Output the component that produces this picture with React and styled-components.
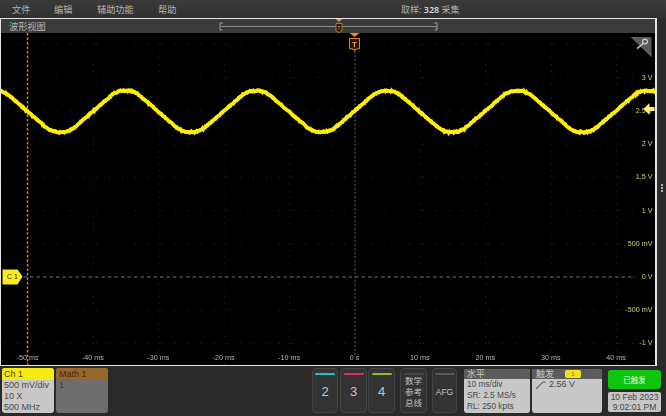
import React from 'react'
import styled, { createGlobalStyle } from 'styled-components'

const FONT = `"Noto Sans", "Noto Sans CJK SC", sans-serif`
const CARD_FONT = `"Liberation Sans", "Noto Sans CJK SC", sans-serif`

const GlobalStyle = createGlobalStyle`
  html, body { margin: 0; padding: 0; background: #2a2a2a; }
  body { font-family: ${FONT}; }
`

const Screen = styled.div`
  width: 666px;
  height: 416px;
  display: flex;
  flex-direction: column;
  overflow: hidden;
  background: #2a2a2a;
`

const MenuBar = styled.div`
  height: 18px;
  flex: none;
  display: flex;
  align-items: center;
  padding-left: 12px;
  background: linear-gradient(#3a3a3a, #303030);
  color: #b4b4b4;
  font-size: 9.2px;
`

const MenuItem = styled.span`
  width: ${p => p.$w}px;
  flex: none;
`

const AcqStatus = styled.span`
  margin-left: 215px;
  color: #b0b0b0;
  font-size: 9px;
  b { color: #d8d8d8; font-weight: 600; }
`

const Main = styled.div`
  height: 348px;
  flex: none;
  display: flex;
`

const ScopeFrame = styled.div`
  width: 657px;
  flex: none;
  box-sizing: border-box;
  display: flex;
  flex-direction: column;
  border: 1.5px solid #e4e4e4;
  border-right-width: 2px;
  background: #000;
`

const TitleBar = styled.div`
  height: 14px;
  flex: none;
  display: flex;
  align-items: center;
  padding-left: 8px;
  background: #3b3b3b;
  color: #b8b8b8;
  font-size: 9.2px;
`

const TitleText = styled.span`
  width: 209px;
  flex: none;
`

const Plot = styled.svg`
  display: block;
  flex: 1;
  min-height: 0;
  width: 100%;
  filter: blur(0.3px);
  font-family: ${CARD_FONT};
`

const SidePanel = styled.div`
  flex: 1;
  display: flex;
  flex-direction: column;
  align-items: center;
  justify-content: center;
  gap: 1px;
  padding-bottom: 8px;
  background: #2c2c2c;
`

const Dot = styled.span`
  width: 2px;
  height: 2px;
  background: #b0b0b0;
`

const BottomBar = styled.div`
  flex: 1;
  display: flex;
  align-items: flex-start;
  padding: 2px 4px 0 2px;
  background: #2a2a2a;
  font-family: ${CARD_FONT};
`

const Badge = styled.div`
  width: ${p => p.$w}px;
  height: ${p => p.$h || 45}px;
  flex: none;
  margin-top: ${p => p.$mt || 0}px;
  margin-right: ${p => p.$mr || 0}px;
  box-sizing: border-box;
  border-radius: 3px;
  overflow: hidden;
  display: flex;
  flex-direction: column;
  background: ${p => p.$bg};
  color: ${p => p.$fg};
  font-size: ${p => p.$size || 9}px;
  line-height: 11px;
`

const BadgeHead = styled.div`
  height: ${p => p.$h}px;
  flex: none;
  display: flex;
  align-items: center;
  padding-left: ${p => p.$pad}px;
  background: ${p => p.$bg};
  color: ${p => p.$fg};
  font-size: 9px;
`

const BadgeBody = styled.div`
  padding-left: ${p => p.$pad}px;
  white-space: nowrap;
`

const SoftKey = styled.div`
  width: ${p => p.$w}px;
  height: 45px;
  flex: none;
  margin-right: ${p => p.$mr}px;
  box-sizing: border-box;
  padding-top: 4px;
  display: flex;
  flex-direction: column;
  align-items: center;
  border: 1px solid #444;
  border-radius: 4px;
  background: #333;
  color: #c4c4c4;
`

const KeyBar = styled.span`
  width: 20px;
  height: 2px;
  flex: none;
  border-radius: 1px;
  background: ${p => p.$color};
`

const KeyLabel = styled.span`
  flex: 1;
  display: flex;
  align-items: center;
  justify-content: center;
  text-align: center;
  padding-bottom: 3px;
  font-size: ${p => p.$size}px;
  line-height: ${p => p.$lh || 12}px;
`

const TriggerPill = styled.span`
  width: 16px;
  height: 8px;
  margin-left: 11px;
  border-radius: 2px;
  background: #f4e21c;
  color: #6a6000;
  font-size: 6px;
  line-height: 8px;
  text-align: center;
`

const TriggerRow = styled.div`
  display: flex;
  align-items: center;
  gap: 2px;
  padding: 0 0 0 3px;
  color: #484848;
`

const StatusColumn = styled.div`
  width: 53px;
  margin-left: 6px;
  flex: none;
  display: flex;
  flex-direction: column;
  gap: 3px;
  padding-top: 2px;
`

const TriggeredButton = styled.div`
  height: 19px;
  display: flex;
  align-items: center;
  justify-content: center;
  border-radius: 3px;
  background: #0fc40f;
  color: #e8ffe8;
  font-size: 7.5px;
`

const DateBox = styled.div`
  height: 20px;
  border-radius: 2px;
  background: #c6c6c6;
  color: #484848;
  font-size: 8.5px;
  line-height: 10px;
  text-align: center;
  white-space: nowrap;
`

// vertical and horizontal divisions, in page pixels
const MS_X = t => 355 + t * 6.54
const V_Y = v => 276 - v * 66

const TIME_LABELS = [-50, -40, -30, -20, -10, 0, 10, 20, 30, 40]
const VOLT_LABELS = [
  ['3 V', 3], ['2.5 V', 2.5], ['2 V', 2], ['1.5 V', 1.5], ['1 V', 1],
  ['500 mV', 0.5], ['0 V', 0], ['-500 mV', -0.5], ['-1 V', -1],
]

function gridDots() {
  const dots = []
  for (let row = 0; row < 10; row++) {
    const y = 45 + row * 33
    for (let x = 2; x < 656; x += 13.08) {
      dots.push(<rect key={`r${row}_${x}`} x={x + 2.84} y={y} width="1" height="1" fill="#303030" />)
    }
  }
  TIME_LABELS.forEach(t => {
    for (let y = 38.4; y < 364; y += 6.6) {
      dots.push(<rect key={`c${t}_${y}`} x={MS_X(t)} y={y} width="1" height="1" fill="#303030" />)
    }
  })
  return dots
}

// clipped triangle, rounded by a short moving average
function waveShape(x) {
  const phase = (((x - 126) / 130.6) % 1 + 1) % 1
  const tri = 1 - 4 * Math.min(phase, 1 - phase)
  return Math.max(-1, Math.min(1, tri * 1.36))
}

function wavePoints(spread, seed) {
  let s = seed
  const rand = () => {
    s = (s * 9301 + 49297) % 233280
    return s / 233280 - 0.5
  }
  const pts = []
  for (let x = 0; x <= 656; x += 1) {
    let sum = 0
    for (let k = -6; k <= 6; k++) sum += waveShape(x + k)
    const y = 112 - 20.5 * (sum / 13) + rand() * spread
    pts.push(`${x},${y.toFixed(2)}`)
  }
  return pts.join(' ')
}

const TriggerTag = ({ x }) =>
  <g transform={`translate(${x} 34)`}>
    <path d="M-5 0H5L0 4Z" fill="#f08a1e" />
    <path d="M-5 5.5H5V15.5L0 16.5L-5 15.5Z" fill="#241407" stroke="#e07f20" strokeWidth="1" />
    <path d="M-1 16H1L0 19Z" fill="#e07f20" />
    <text x="0" y="13.5" textAnchor="middle" fontSize="8" fontWeight="700" fill="#e8a050">T</text>
  </g>

const Scope = () =>
  <Plot viewBox="1.5 34 654 330" preserveAspectRatio="none">
    {gridDots()}
    <line x1="28" y1="34" x2="28" y2="364" stroke="#e08030" strokeWidth="1.4" strokeDasharray="2.5 2" />
    <line x1="355.5" y1="52" x2="355.5" y2="356" stroke="#777" strokeWidth="0.8" strokeDasharray="2 2" />
    <line x1="24" y1="276.5" x2="636" y2="276.5" stroke="#8a8a8a" strokeWidth="0.8" strokeDasharray="3.5 3" />

    <polyline points={wavePoints(2.6, 7)} fill="none" stroke="#e8dc00" strokeWidth="3" />
    <polyline points={wavePoints(0.8, 91)} fill="none" stroke="#fff000" strokeWidth="3.6" strokeLinejoin="round" />

    <TriggerTag x={355} />

    <path d="M631 38H652V58Z" fill="#5c5c5c" />
    <circle cx="645.5" cy="42.5" r="2.4" fill="none" stroke="#cfcfcf" strokeWidth="1.2" />
    <line x1="643.6" y1="44.4" x2="637.5" y2="49.5" stroke="#cfcfcf" strokeWidth="1.4" />

    <path d="M3 269H18L23 276L18 284H3Z" fill="#f8ec1c" />
    <text x="13" y="279" textAnchor="middle" fontSize="7" fill="#222">C 1</text>

    {VOLT_LABELS.map(([label, v]) =>
      <text key={label} x="653" y={V_Y(v) + 2.5} textAnchor="end" fontSize="7.2" fill="#d0d070">{label}</text>
    )}
    <path d="M644 109.5L650 103.5V107.5H655V111.5H650V115.5Z" fill="#fff27a" />

    {TIME_LABELS.map(t =>
      <text key={t} x={MS_X(t)} y="359" textAnchor="middle" fontSize="7.2" fill="#b4b4b4">
        {t === 0 ? '0 s' : `${t} ms`}
      </text>
    )}
  </Plot>

const Timeline = () =>
  <svg width="222" height="14" viewBox="0 0 222 14">
    <path d="M4.5 4H2V11H4.5" fill="none" stroke="#a0a0a0" />
    <line x1="3" y1="7.5" x2="219" y2="7.5" stroke="#8a8a8a" strokeWidth="1.2" />
    <path d="M216.5 4H219V11H216.5" fill="none" stroke="#a0a0a0" />
    <path d="M117.5 0H124.5L121 3Z" fill="#f08a1e" />
    <path d="M118 4.5H124V12L121 13.5L118 12Z" fill="#2b1c0c" stroke="#c07428" />
    <text x="121" y="11" textAnchor="middle" fontSize="6" fill="#c08040">T</text>
  </svg>

const SlopeIcon = () =>
  <svg width="12" height="10" viewBox="0 0 12 10">
    <path d="M1 9L8 2H11" fill="none" stroke="#6a6088" strokeWidth="1.1" />
  </svg>

export default function App() {
  return (
    <Screen>
      <GlobalStyle />
      <MenuBar>
        <MenuItem $w={42}>文件</MenuItem>
        <MenuItem $w={43}>编辑</MenuItem>
        <MenuItem $w={61}>辅助功能</MenuItem>
        <MenuItem $w={28}>帮助</MenuItem>
        <AcqStatus>取样: <b>328</b> 采集</AcqStatus>
      </MenuBar>
      <Main>
        <ScopeFrame>
          <TitleBar>
            <TitleText>波形视图</TitleText>
            <Timeline />
          </TitleBar>
          <Scope />
        </ScopeFrame>
        <SidePanel>
          <Dot /><Dot /><Dot />
        </SidePanel>
      </Main>
      <BottomBar>
        <Badge $w={52} $mr={2} $bg="#c8c8c8" $fg="#4a4a4a">
          <BadgeHead $h={12} $pad={2} $bg="#f5ea14" $fg="#4a4400">Ch 1</BadgeHead>
          <BadgeBody $pad={2}>500 mV/div<br />10 X<br />500 MHz</BadgeBody>
        </Badge>
        <Badge $w={52} $mr={204} $bg="#6e6e6e" $fg="#3e3e3e">
          <BadgeHead $h={12} $pad={3} $bg="#99662c" $fg="#3c2a10">Math 1</BadgeHead>
          <BadgeBody $pad={3}>1</BadgeBody>
        </Badge>
        <SoftKey $w={26} $mr={2}><KeyBar $color="#22c2c8" /><KeyLabel $size={13}>2</KeyLabel></SoftKey>
        <SoftKey $w={27} $mr={1}><KeyBar $color="#d63058" /><KeyLabel $size={13}>3</KeyLabel></SoftKey>
        <SoftKey $w={27} $mr={5}><KeyBar $color="#8cc022" /><KeyLabel $size={13}>4</KeyLabel></SoftKey>
        <SoftKey $w={27} $mr={5}><KeyBar $color="#444" /><KeyLabel $size={8.5} $lh={11}>数学<br />参考<br />总线</KeyLabel></SoftKey>
        <SoftKey $w={25} $mr={7}><KeyBar $color="#5a5a5a" /><KeyLabel $size={8.5}>AFG</KeyLabel></SoftKey>
        <Badge $w={66} $h={44} $mt={1} $mr={2} $size={8.3} $bg="#c8c8c8" $fg="#484848">
          <BadgeHead $h={10} $pad={3} $bg="#5c5c5c" $fg="#c8c8c8">水平</BadgeHead>
          <BadgeBody $pad={3}>10 ms/div<br />SR: 2.5 MS/s<br />RL: 250 kpts</BadgeBody>
        </Badge>
        <Badge $w={70} $h={44} $mt={1} $bg="#c8c8c8" $fg="#484848">
          <BadgeHead $h={10} $pad={4} $bg="#5c5c5c" $fg="#c8c8c8">
            触发<TriggerPill>1</TriggerPill>
          </BadgeHead>
          <TriggerRow><SlopeIcon />2.56 V</TriggerRow>
        </Badge>
        <StatusColumn>
          <TriggeredButton>已触发</TriggeredButton>
          <DateBox>10 Feb 2023<br />9:02:01 PM</DateBox>
        </StatusColumn>
      </BottomBar>
    </Screen>
  )
}
